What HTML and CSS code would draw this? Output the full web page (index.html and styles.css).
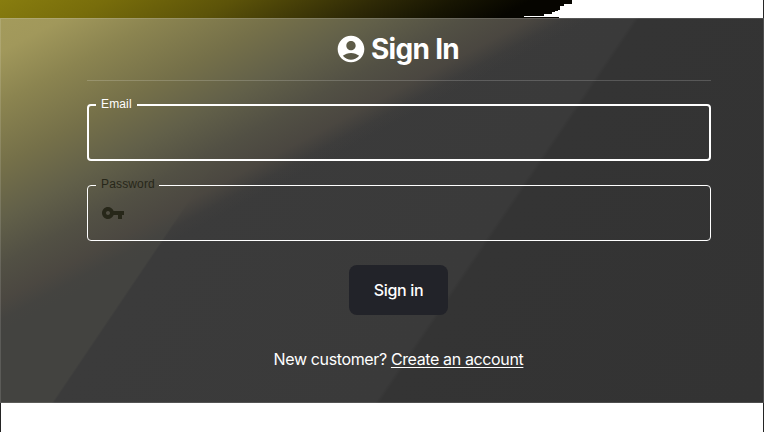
FILE: index.html
```
<!DOCTYPE html>
<html lang="en">
<head>
<meta charset="utf-8">
<title>Sign In</title>
<link rel="stylesheet" href="styles.css">
</head>
<body>
<div class="backdrop">
  <svg class="glow-edge" width="764" height="18" viewBox="0 0 764 18" shape-rendering="crispEdges" aria-hidden="true">
    <path fill="#fff" d="M572 0H763V18H559V17H524V16H544V14H552V12H555V11H558V10H560V6H564V4H572Z"/>
  </svg>
</div>
<main class="card">
  <form class="form">
    <h1 class="title">
      <svg width="32" height="32" viewBox="0 0 24 24" fill="currentColor" aria-hidden="true"><path d="M12 2C6.48 2 2 6.48 2 12s4.48 10 10 10 10-4.48 10-10S17.52 2 12 2zm0 4c1.93 0 3.500 1.570 3.500 3.500S13.930 13 12 13s-3.500-1.570-3.500-3.500S10.070 6 12 6zm0 14c-2.030 0-4.430-.82-6.140-2.880C7.550 15.800 9.680 15 12 15s4.450.8 6.140 2.120C16.430 19.180 14.030 20 12 20z"/></svg>
      <span>Sign In</span>
    </h1>
    <fieldset class="field focused">
      <legend>Email</legend>
    </fieldset>
    <fieldset class="field password">
      <legend>Password</legend>
      <svg class="key" width="24" height="24" viewBox="0 0 24 24" fill="currentColor" aria-hidden="true"><path d="M12.650 10C11.830 7.670 9.610 6 7 6c-3.310 0-6 2.690-6 6s2.690 6 6 6c2.610 0 4.830-1.670 5.650-4H17v4h4v-4h2v-4H12.650zM7 14c-1.100 0-2-.9-2-2s.9-2 2-2 2 .9 2 2-.9 2-2 2z"/></svg>
    </fieldset>
    <button class="submit" type="button">Sign in</button>
    <p class="signup">New customer? <a href="#">Create an account</a></p>
  </form>
</main>
<div class="below"></div>
</body>
</html>
```
FILE: styles.css
```
* { box-sizing: border-box; }
body {
  margin: 0;
  height: 432px;
  overflow: hidden;
  background: #fff;
  color: #fff;
  font-family: Inter, "Liberation Sans", sans-serif;
}
.backdrop {
  height: 18px;
  border-right: 1px solid #272727;
  background: linear-gradient(152deg, #887d0f 0, #786d0b 50px, #5c5309 110px, #2e2906 178px, #171502 215px, #060500 250px);
}
.glow-edge { display: block; }
.card {
  height: 385px;
  border: 1px solid rgba(255, 255, 255, 0.13);
  background:
    linear-gradient(152deg, #a49b5c 0, #a1985b 30px, #8b8450 76px, #757049 131px, #626049 178px, #525044 218px, rgba(76, 72, 65, 0.9) 250px, rgba(72, 69, 64, 0.2) 267px, rgba(68, 68, 65, 0) 278px) border-box,
    linear-gradient(124deg, #434340 0, #434340 258px, #3b3b3b 260px, #3a3a3a 526px, #343434 530px, #333 100%) border-box;
}
.form {
  display: flex;
  flex-direction: column;
  align-items: center;
  width: 624px;
  margin-left: 86px;
}
.title {
  display: flex;
  align-items: center;
  justify-content: center;
  gap: 4px;
  width: 100%;
  height: 62px;
  margin: 0 0 17px;
  padding: 0 4px 1px 0;
  border-bottom: 1px solid rgba(255, 255, 255, 0.18);
  font-size: 28px;
  line-height: 34px;
  font-weight: 700;
  letter-spacing: -0.7px;
}
.title svg { margin-top: -1px; }
.field {
  width: 100%;
  min-width: 0;
  height: 64px;
  margin: 0 0 17px;
  padding: 0 12px;
  border: 1px solid #fff;
  border-radius: 4px;
  font-family: "Liberation Sans", Arial, sans-serif;
}
.field.focused { height: 63px; padding: 0 11px; border-width: 2px; }
.field legend {
  height: 14px;
  margin-left: -4px;
  padding: 0 5px;
  font-size: 12px;
  line-height: 12px;
  letter-spacing: 0.15px;
}
.password { height: 63px; }
.password legend, .key { color: #272719; }
.password legend { padding-right: 4px; }
.key { display: block; margin: 9px 0 0 1px; }
.submit {
  width: 99px;
  height: 50px;
  margin: 7px 1px 0 0;
  padding: 0;
  border: 0;
  border-radius: 8px;
  background: #222329;
  color: #fff;
  font: 500 16px/24px Inter, sans-serif;
  letter-spacing: -0.35px;
}
.signup {
  margin: 32px 1px 0 0;
  font-size: 16px;
  line-height: 24px;
  letter-spacing: -0.37px;
}
.signup a { color: inherit; text-underline-offset: 2px; }
.below {
  height: 29px;
  border: solid #242424;
  border-width: 0 1px;
}
```
